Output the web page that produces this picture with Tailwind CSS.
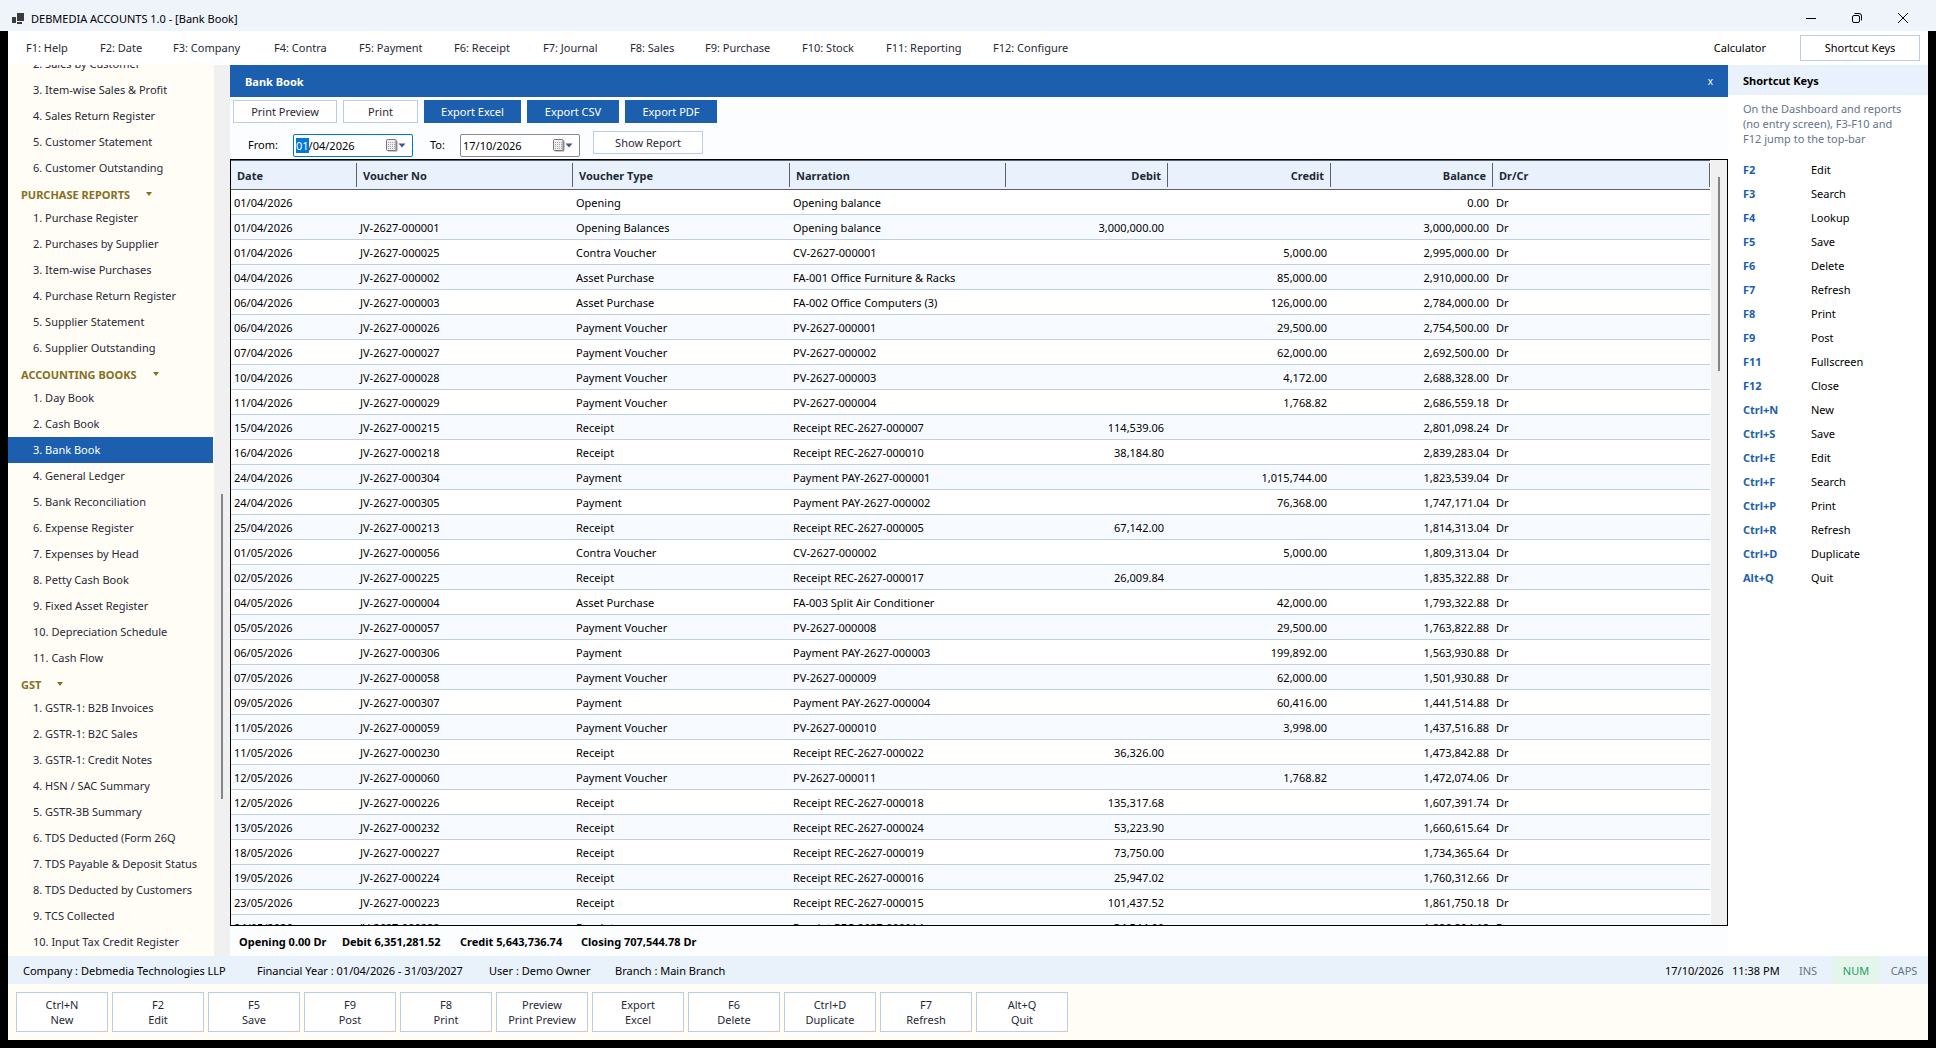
<!DOCTYPE html>
<html lang="en">
<head>
<meta charset="utf-8">
<title>DEBMEDIA ACCOUNTS 1.0 - [Bank Book]</title>
<script src="https://cdn.jsdelivr.net/npm/@tailwindcss/browser@4"></script>
</head>
<body class="h-screen overflow-hidden bg-black font-['Noto_Sans','Open_Sans',sans-serif] text-[11px] leading-[15px] text-black">
<div class="flex h-full flex-col">

  <!-- Title bar -->
  <header class="flex h-[31px] shrink-0 items-center bg-[#eff3fa] pt-1.5 pr-[27px] pl-3">
    <svg class="h-3 w-3" viewBox="0 0 12 12" fill="#3b3b3b"><path d="M0 4h4v6H0zM5 0h7v8H5zM5 9h5v2H5z"/></svg>
    <h1 class="ml-[7px] flex-1">DEBMEDIA ACCOUNTS 1.0 - [Bank Book]</h1>
    <div class="flex gap-[34px] pb-0.5 text-black">
      <button type="button" aria-label="Minimise"><svg class="h-3 w-3" viewBox="0 0 12 12" stroke="currentColor" fill="none"><path d="M1 6.500h10"/></svg></button>
      <button type="button" aria-label="Restore"><svg class="h-3 w-3" viewBox="0 0 12 12" stroke="currentColor" fill="none"><rect x="1.500" y="3.500" width="7" height="7" rx="1.500"/><path d="M3.500 1.500h4.500a2.500 2.500 0 0 1 2.500 2.500v4.500"/></svg></button>
      <button type="button" aria-label="Close"><svg class="h-3 w-3" viewBox="0 0 12 12" stroke="currentColor" fill="none"><path d="M1 1l10 10M11 1L1 11"/></svg></button>
    </div>
  </header>

  <div class="flex min-h-0 flex-1 flex-col px-2 pb-2">

    <!-- Menu bar -->
    <nav class="flex h-[34px] shrink-0 items-center bg-white pr-2 pl-[18px] text-[#1f2937]">
      <div id="menu" class="grid flex-1 grid-cols-[74px_73px_101px_85px_95px_89px_87px_75px_97px_84px_107px_auto] justify-start pb-0.5"></div>
      <button type="button" class="mr-[34px] pb-0.5 text-black">Calculator</button>
      <button type="button" class="h-[26px] w-[120px] border border-[#bccde2] bg-white pb-0.5 text-black">Shortcut Keys</button>
    </nav>

    <main class="flex min-h-0 flex-1">

      <!-- Report navigation -->
      <aside class="flex w-[222px] shrink-0 overflow-hidden bg-[#f0f0f0]">
        <div class="w-[206px] overflow-hidden bg-[#fffdf5]">
          <div id="side" class="-mt-3.5 text-[#1f2937]"></div>
        </div>
        <div class="flex flex-1 justify-center pt-[429px]"><div class="h-[305px] w-0.5 bg-[#858585]"></div></div>
      </aside>

      <!-- Report -->
      <section class="flex min-w-0 flex-1 flex-col bg-[#fcfdff]">
        <div class="flex h-8 shrink-0 items-center justify-between bg-[#1c5fae] pr-[15px] pl-[15px] text-white">
          <h2 class="font-bold">Bank Book</h2>
          <button type="button" aria-label="Close report" class="text-[10px]">x</button>
        </div>

        <div class="h-[62px] shrink-0 pt-[3px]">
          <div class="flex gap-1.5 pl-[3px]">
            <button type="button" class="h-[23px] w-[104px] border border-[#bccde2] bg-white text-[#1f2937]">Print Preview</button>
            <button type="button" class="h-[23px] w-[75px] border border-[#bccde2] bg-white text-[#1f2937]">Print</button>
            <button type="button" class="h-[23px] w-[97px] bg-[#1c5fae] text-white">Export Excel</button>
            <button type="button" class="h-[23px] w-[92px] bg-[#1c5fae] text-white">Export CSV</button>
            <button type="button" class="h-[23px] w-[92px] bg-[#1c5fae] text-white">Export PDF</button>
          </div>
          <div class="mt-2 flex items-center pl-[18px]">
            <label for="from" class="w-[45px] pb-0.5">From:</label>
            <div class="flex h-[23px] w-[120px] items-center rounded-xs border border-[#0078d7] bg-white pr-1.5 pl-0.5">
              <input id="from" type="text" value="01/04/2026" class="w-full min-w-0 flex-1 outline-none selection:bg-[#0078d7] selection:text-white">
              <button type="button" aria-label="Pick the from date"><svg class="h-3.5 w-5" viewBox="0 0 20 14"><rect x="1.500" y="1.500" width="10" height="11" rx="1" fill="#9b9396"/><rect x=".5" y=".5" width="9.500" height="11" rx="1" fill="#efedf0" stroke="#7c7478"/><path d="M2 3.500h7M2 5.500h7M2 7.500h7M2 9.500h7" stroke="#a9a3ad" stroke-dasharray="1 1"/><path d="M12.500 4.500h7L16 8.500z" fill="#40588a"/></svg></button>
            </div>
            <label for="to" class="ml-[17px] w-[30px] pb-0.5">To:</label>
            <div class="flex h-[23px] w-[120px] items-center rounded-xs border border-[#8a8a8a] bg-white pr-1.5 pl-0.5">
              <input id="to" type="text" value="17/10/2026" class="w-full min-w-0 flex-1 outline-none">
              <button type="button" aria-label="Pick the to date"><svg class="h-3.5 w-5" viewBox="0 0 20 14"><rect x="1.500" y="1.500" width="10" height="11" rx="1" fill="#9b9396"/><rect x=".5" y=".5" width="9.500" height="11" rx="1" fill="#efedf0" stroke="#7c7478"/><path d="M2 3.500h7M2 5.500h7M2 7.500h7M2 9.500h7" stroke="#a9a3ad" stroke-dasharray="1 1"/><path d="M12.500 4.500h7L16 8.500z" fill="#40588a"/></svg></button>
            </div>
            <button type="button" class="mb-1.5 ml-[13px] h-[23px] w-[110px] border border-[#bccde2] bg-white text-[#1f2937]">Show Report</button>
          </div>
        </div>

        <div class="flex min-h-0 flex-1 border border-black bg-[#f0f0f0]">
          <div class="min-w-0 flex-1 overflow-hidden bg-white pr-px">
            <table class="w-full table-fixed border-separate border-spacing-0">
              <colgroup><col class="w-[126px]"><col class="w-[216px]"><col class="w-[217px]"><col class="w-[216px]"><col class="w-[162px]"><col class="w-[163px]"><col class="w-[162px]"><col></colgroup>
              <thead><tr id="head"></tr></thead>
              <tbody id="rows"></tbody>
            </table>
          </div>
          <div class="flex w-4 shrink-0 justify-center pt-[17px]"><div class="h-[194px] w-0.5 bg-[#858585]"></div></div>
        </div>

        <div class="grid h-[30px] shrink-0 grid-cols-[103px_118px_121px_auto] items-center justify-start pl-[9px] font-bold">
          <span>Opening 0.00 Dr</span><span>Debit 6,351,281.52</span><span>Credit 5,643,736.74</span><span>Closing 707,544.78 Dr</span>
        </div>
      </section>

      <!-- Shortcut list -->
      <aside class="w-[200px] shrink-0 bg-white">
        <h2 class="flex h-[30px] items-center bg-[#e9f2fc] pl-[15px] font-bold">Shortcut Keys</h2>
        <p class="pt-1.5 pl-[15px] text-[#64748b]">On the Dashboard and reports<br>(no entry screen), F3-F10 and<br>F12 jump to the top-bar</p>
        <dl id="keys" class="mt-[11px] grid auto-rows-[24px] grid-cols-[68px_auto] items-center pl-[15px]"></dl>
      </aside>
    </main>

    <!-- Status bar -->
    <footer class="flex h-7 shrink-0 items-center bg-[#e9f1fb] pl-[15px]">
      <div class="grid flex-1 grid-cols-[234px_232px_126px_auto] justify-start">
        <span>Company : Debmedia Technologies LLP</span><span>Financial Year : 01/04/2026 - 31/03/2027</span><span>User : Demo Owner</span><span>Branch : Main Branch</span>
      </div>
      <span class="w-[67px]">17/10/2026</span><span class="w-[52px]">11:38 PM</span>
      <span class="w-12 text-center text-[#64748b]">INS</span>
      <span class="flex h-full w-12 items-center justify-center bg-[#e4f5eb] text-[#1f9d61]">NUM</span>
      <span class="w-12 text-center text-[#64748b]">CAPS</span>
    </footer>

    <div id="actions" class="flex h-14 shrink-0 items-center gap-1 bg-[#fffdf5] pl-2"></div>
  </div>
</div>

<script>
const byId = id => document.getElementById(id);

byId('menu').innerHTML = ['F1: Help','F2: Date','F3: Company','F4: Contra','F5: Payment','F6: Receipt','F7: Journal','F8: Sales','F9: Purchase','F10: Stock','F11: Reporting','F12: Configure']
  .map(t => `<button type="button" class="text-left whitespace-nowrap">${t}</button>`).join('');

const groups = [
  [null, ['2. Sales by Customer','3. Item-wise Sales &amp; Profit','4. Sales Return Register','5. Customer Statement','6. Customer Outstanding']],
  ['PURCHASE REPORTS', ['1. Purchase Register','2. Purchases by Supplier','3. Item-wise Purchases','4. Purchase Return Register','5. Supplier Statement','6. Supplier Outstanding']],
  ['ACCOUNTING BOOKS', ['1. Day Book','2. Cash Book','3. Bank Book','4. General Ledger','5. Bank Reconciliation','6. Expense Register','7. Expenses by Head','8. Petty Cash Book','9. Fixed Asset Register','10. Depreciation Schedule','11. Cash Flow']],
  ['GST', ['1. GSTR-1: B2B Invoices','2. GSTR-1: B2C Sales','3. GSTR-1: Credit Notes','4. HSN / SAC Summary','5. GSTR-3B Summary','6. TDS Deducted (Form 26Q','7. TDS Payable &amp; Deposit Status','8. TDS Deducted by Customers','9. TCS Collected','10. Input Tax Credit Register']]
];
byId('side').innerHTML = groups.map(([title, items]) =>
  (title ? `<button type="button" class="flex h-6 w-full items-center gap-4 pt-0.5 pl-[13px] font-bold text-[#85701f]">${title}<svg class="h-1.5 w-1.5" viewBox="0 0 6 6" fill="currentColor"><path d="M0 1h6L3 5z"/></svg></button>` : '') +
  items.map(t => `<a href="#" class="${t === '3. Bank Book' ? 'mr-px flex h-[26px] items-center bg-[#1c5fae] pb-0.5 pl-[25px] text-white' : 'flex h-[26px] items-center pb-0.5 pl-[25px] whitespace-nowrap'}">${t}</a>`).join('')
).join('');

const heads = ['Date','Voucher No','Voucher Type','Narration','Debit','Credit','Balance','Dr/Cr'];
byId('head').innerHTML = heads.map((t, i) => {
  const right = i > 3 && i < 7;
  return `<th scope="col" class="h-[30px] border-y border-[#5f6368] bg-[#e9f2fc] p-0 font-bold text-[#1f2937]"><div class="${right ? 'flex h-6 items-center justify-end border-r border-[#5f6368] pr-[6px]' : 'flex h-6 items-center border-r border-[#5f6368] pl-[6px]'}">${t}</div></th>`;
}).join('');

const rows = `01/04/2026||Opening|Opening balance|||0.00
01/04/2026|000001|Opening Balances|Opening balance|3,000,000.00||3,000,000.00
01/04/2026|000025|Contra Voucher|CV-2627-000001||5,000.00|2,995,000.00
04/04/2026|000002|Asset Purchase|FA-001 Office Furniture &amp; Racks||85,000.00|2,910,000.00
06/04/2026|000003|Asset Purchase|FA-002 Office Computers (3)||126,000.00|2,784,000.00
06/04/2026|000026|Payment Voucher|PV-2627-000001||29,500.00|2,754,500.00
07/04/2026|000027|Payment Voucher|PV-2627-000002||62,000.00|2,692,500.00
10/04/2026|000028|Payment Voucher|PV-2627-000003||4,172.00|2,688,328.00
11/04/2026|000029|Payment Voucher|PV-2627-000004||1,768.82|2,686,559.18
15/04/2026|000215|Receipt|Receipt REC-2627-000007|114,539.06||2,801,098.24
16/04/2026|000218|Receipt|Receipt REC-2627-000010|38,184.80||2,839,283.04
24/04/2026|000304|Payment|Payment PAY-2627-000001||1,015,744.00|1,823,539.04
24/04/2026|000305|Payment|Payment PAY-2627-000002||76,368.00|1,747,171.04
25/04/2026|000213|Receipt|Receipt REC-2627-000005|67,142.00||1,814,313.04
01/05/2026|000056|Contra Voucher|CV-2627-000002||5,000.00|1,809,313.04
02/05/2026|000225|Receipt|Receipt REC-2627-000017|26,009.84||1,835,322.88
04/05/2026|000004|Asset Purchase|FA-003 Split Air Conditioner||42,000.00|1,793,322.88
05/05/2026|000057|Payment Voucher|PV-2627-000008||29,500.00|1,763,822.88
06/05/2026|000306|Payment|Payment PAY-2627-000003||199,892.00|1,563,930.88
07/05/2026|000058|Payment Voucher|PV-2627-000009||62,000.00|1,501,930.88
09/05/2026|000307|Payment|Payment PAY-2627-000004||60,416.00|1,441,514.88
11/05/2026|000059|Payment Voucher|PV-2627-000010||3,998.00|1,437,516.88
11/05/2026|000230|Receipt|Receipt REC-2627-000022|36,326.00||1,473,842.88
12/05/2026|000060|Payment Voucher|PV-2627-000011||1,768.82|1,472,074.06
12/05/2026|000226|Receipt|Receipt REC-2627-000018|135,317.68||1,607,391.74
13/05/2026|000232|Receipt|Receipt REC-2627-000024|53,223.90||1,660,615.64
18/05/2026|000227|Receipt|Receipt REC-2627-000019|73,750.00||1,734,365.64
19/05/2026|000224|Receipt|Receipt REC-2627-000016|25,947.02||1,760,312.66
23/05/2026|000223|Receipt|Receipt REC-2627-000015|101,437.52||1,861,750.18
24/05/2026|000222|Receipt|Receipt REC-2627-000014|34,544.00||1,896,294.18`.split('\n').map(r => r.split('|'));
byId('rows').innerHTML = rows.map(r => {
  const cells = [r[0], r[1] && 'JV-2627-' + r[1], r[2], r[3], r[4], r[5], r[6], 'Dr'];
  return `<tr class="odd:bg-white even:bg-[#f7fbff]">` + cells.map((c, i) =>
    `<td class="${i > 3 && i < 7 ? 'h-[25px] border-b border-[#c0cfe2] pr-1 pl-[3px] py-0 text-right' : 'h-[25px] border-b border-[#c0cfe2] px-[3px] py-0 whitespace-nowrap'}">${c}</td>`).join('') + '</tr>';
}).join('');

byId('keys').innerHTML = [['F2','Edit'],['F3','Search'],['F4','Lookup'],['F5','Save'],['F6','Delete'],['F7','Refresh'],['F8','Print'],['F9','Post'],['F11','Fullscreen'],['F12','Close'],['Ctrl+N','New'],['Ctrl+S','Save'],['Ctrl+E','Edit'],['Ctrl+F','Search'],['Ctrl+P','Print'],['Ctrl+R','Refresh'],['Ctrl+D','Duplicate'],['Alt+Q','Quit']]
  .map(([k, v]) => `<dt class="font-bold text-[#1c5fae]">${k}</dt><dd>${v}</dd>`).join('');

byId('actions').innerHTML = [['Ctrl+N','New'],['F2','Edit'],['F5','Save'],['F9','Post'],['F8','Print'],['Preview','Print Preview'],['Export','Excel'],['F6','Delete'],['Ctrl+D','Duplicate'],['F7','Refresh'],['Alt+Q','Quit']]
  .map(([k, v]) => `<button type="button" class="h-10 w-[92px] border border-[#bccde2] bg-white text-[#1f2937]">${k}<br>${v}</button>`).join('');

byId('from').focus();
byId('from').setSelectionRange(0, 2);
</script>
</body>
</html>
